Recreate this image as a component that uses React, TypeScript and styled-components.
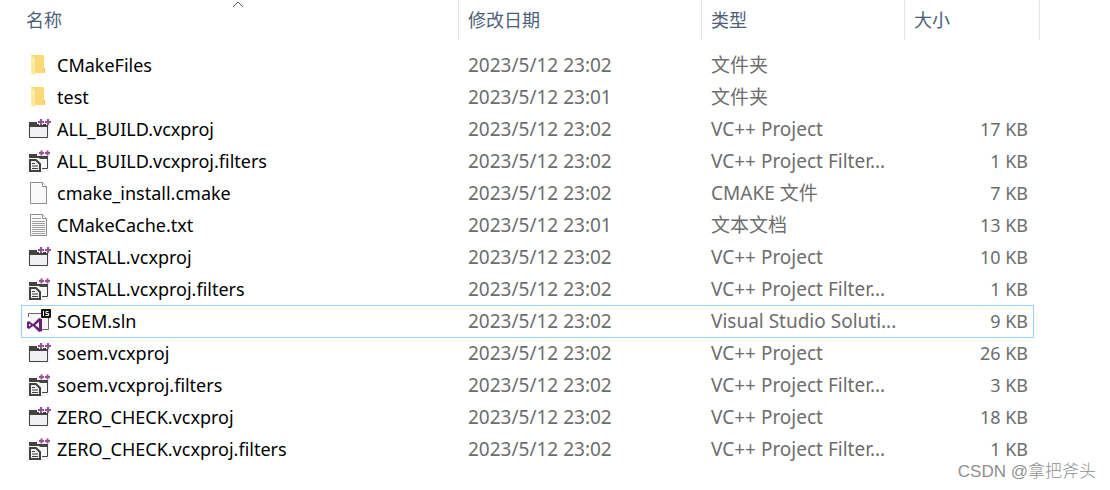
import React from "react";
import styled, { createGlobalStyle } from "styled-components";

const GlobalStyle = createGlobalStyle`
  body {
    margin: 0;
    background: #fff;
    font-family: "Noto Sans", "Noto Sans CJK SC", sans-serif;
  }
`;

const Page = styled.main`
  position: relative;
  padding: 0 70px 25px 21px;
`;

const FileTable = styled.table`
  width: 100%;
  table-layout: fixed;
  border-collapse: separate;
  border-spacing: 0;
`;

const Column = styled.col<{ $width?: number }>`
  width: ${(p) => (p.$width ? `${p.$width}px` : "auto")};
`;

const HeaderCell = styled.th<{ $first?: boolean }>`
  position: relative;
  height: 40px;
  padding: 0 0 2px ${(p) => (p.$first ? 5 : 9)}px;
  border-right: 1px solid #e5e5e5;
  box-sizing: border-box;
  text-align: left;
  vertical-align: middle;
  font-weight: 400;
`;

const SortButton = styled.button`
  display: block;
  padding: 0;
  border: 0;
  background: none;
  color: #4c607a;
  font-family: "Noto Sans CJK SC", sans-serif;
  font-size: 18px;
  font-weight: 400;
  line-height: 24px;
`;

const SortMark = styled.svg`
  position: absolute;
  top: 1px;
  left: calc(50% - 8px);
`;

const Body = styled.tbody`
  &::before {
    content: "";
    display: table-row;
    height: 9px;
  }
`;

const Row = styled.tr`
  position: relative;
  height: 32px;
`;

const Cell = styled.td`
  height: 32px;
  padding: 0 0 0 9px;
  color: #6d6d6d;
  font-size: 19px;
  line-height: 32px;
  white-space: nowrap;
`;

const SizeCell = styled(Cell)`
  padding-right: 12px;
  font-size: 18px;
  text-align: right;
`;

const NameCell = styled(Cell)<{ $focused?: boolean }>`
  padding-left: 5px;
  color: #000;
  font-size: 18px;

  &::after {
    content: "";
    display: ${(p) => (p.$focused ? "block" : "none")};
    position: absolute;
    inset: 0 6px -1px 0;
    border: 1px solid #99d1ff;
    pointer-events: none;
  }
`;

const FileName = styled.span`
  display: flex;
  align-items: center;
  gap: 6px;
`;

const Icon = styled.svg`
  flex: none;
  width: 25px;
  height: 24px;
`;

const Watermark = styled.footer`
  position: absolute;
  right: 14px;
  bottom: 6px;
  color: #8f8f8f;
  font-family: "Liberation Sans", "Noto Sans CJK SC", sans-serif;
  font-size: 17px;
  font-weight: 300;
  line-height: 24px;
`;

type Kind = "folder" | "project" | "filters" | "file" | "text" | "solution";

function Pluses({ d }: { d: string }) {
  return (
    <>
      <path d={d} stroke="#f6f6f6" strokeWidth="4" fill="none" />
      <path d={d} stroke="#9b4f96" strokeWidth="2" fill="none" />
    </>
  );
}

function FileIcon({ kind }: { kind: Kind }) {
  return (
    <Icon viewBox="0 0 25 24" aria-hidden="true">
      {kind === "folder" && (
        <>
          <path d="M5 2h13v13h1v5H8z" fill="#f9d978" />
          <path d="M5 2l4 3v18l-4-3z" fill="#ffe9a2" />
          <path d="M18 15h1v5h-1z" fill="#f0c75c" />
        </>
      )}
      {kind === "project" && (
        <>
          <path d="M2 3h22v19H2z" fill="#f6f6f6" />
          <path d="M3.500 8v12.500h18V8" fill="#f0eff1" stroke="#424242" />
          <path d="M3 5h8v2h11v3H3z" fill="#424242" />
          <Pluses d="M12 5h6M15 2v6M19 5h6M22 2v6" />
        </>
      )}
      {kind === "filters" && (
        <>
          <path d="M1 3h22v20H1z" fill="#f6f6f6" />
          <path d="M3 5h8v2h11v3H3z" fill="#424242" />
          <path d="M21.500 8v11.500H16" fill="none" stroke="#424242" />
          <path d="M2 9h11l3 3v11H2z" fill="#f6f6f6" />
          <path d="M4 11h6l4 4v7H4z" fill="#f0eff1" stroke="#424242" strokeWidth="2" />
          <path d="M6 14.500h3M6 17h6M6 19.500h6" stroke="#424242" />
          <Pluses d="M13 4h5M15.500 1.500v5M19 4h5M21.500 1.500v5" />
        </>
      )}
      {(kind === "file" || kind === "text") && (
        <>
          <path d="M4.500 1.500h12l4 4v17h-16z" fill="#f9f9f9" stroke="#8c8c8c" />
          <path d="M16.500 1.500v4h4" fill="#fff" stroke="#8c8c8c" />
        </>
      )}
      {kind === "text" && (
        <path d="M6 5.500h9M6 8.500h13M6 10.500h13M6 12.500h13M6 14.500h13M6 16.500h13M6 18.500h13M6 20.500h13" stroke="#a0a0a0" />
      )}
      {kind === "solution" && (
        <>
          <path d="M2.500 8V4.500h20v16H14" fill="#f6f6f6" stroke="#686868" />
          <rect x="15" y="0" width="10" height="9" rx="1" fill="#111" />
          <path d="M17.500 2v5M22.500 2.500h-2.500v2h2.500v2h-3" stroke="#fff" fill="none" />
          <path d="M1 13l2-1 4 3 6-6 3 1v12l-3 1-6-6-4 3-2-1zM3 14.500v3l2-1.500zM13 13l-4 3 4 3z" fill="#68217a" fillRule="evenodd" />
        </>
      )}
    </Icon>
  );
}

interface FileEntry {
  name: string;
  date: string;
  type: string;
  size?: string;
  kind: Kind;
  focused?: boolean;
}

const files: FileEntry[] = [
  { name: "CMakeFiles", date: "2023/5/12 23:02", type: "文件夹", kind: "folder" },
  { name: "test", date: "2023/5/12 23:01", type: "文件夹", kind: "folder" },
  { name: "ALL_BUILD.vcxproj", date: "2023/5/12 23:02", type: "VC++ Project", size: "17 KB", kind: "project" },
  { name: "ALL_BUILD.vcxproj.filters", date: "2023/5/12 23:02", type: "VC++ Project Filter...", size: "1 KB", kind: "filters" },
  { name: "cmake_install.cmake", date: "2023/5/12 23:02", type: "CMAKE 文件", size: "7 KB", kind: "file" },
  { name: "CMakeCache.txt", date: "2023/5/12 23:01", type: "文本文档", size: "13 KB", kind: "text" },
  { name: "INSTALL.vcxproj", date: "2023/5/12 23:02", type: "VC++ Project", size: "10 KB", kind: "project" },
  { name: "INSTALL.vcxproj.filters", date: "2023/5/12 23:02", type: "VC++ Project Filter...", size: "1 KB", kind: "filters" },
  { name: "SOEM.sln", date: "2023/5/12 23:02", type: "Visual Studio Soluti...", size: "9 KB", kind: "solution", focused: true },
  { name: "soem.vcxproj", date: "2023/5/12 23:02", type: "VC++ Project", size: "26 KB", kind: "project" },
  { name: "soem.vcxproj.filters", date: "2023/5/12 23:02", type: "VC++ Project Filter...", size: "3 KB", kind: "filters" },
  { name: "ZERO_CHECK.vcxproj", date: "2023/5/12 23:02", type: "VC++ Project", size: "18 KB", kind: "project" },
  { name: "ZERO_CHECK.vcxproj.filters", date: "2023/5/12 23:02", type: "VC++ Project Filter...", size: "1 KB", kind: "filters" },
];

export default function App() {
  return (
    <Page>
      <GlobalStyle />
      <FileTable>
        <colgroup>
          <Column />
          <Column $width={243} />
          <Column $width={203} />
          <Column $width={135} />
        </colgroup>
        <thead>
          <tr>
            <HeaderCell $first aria-sort="ascending">
              <SortButton type="button">名称</SortButton>
              <SortMark width="12" height="7" viewBox="0 0 12 7" aria-hidden="true">
                <path d="M1 6l5-5 5 5" fill="none" stroke="#5a5a5a" />
              </SortMark>
            </HeaderCell>
            <HeaderCell><SortButton type="button">修改日期</SortButton></HeaderCell>
            <HeaderCell><SortButton type="button">类型</SortButton></HeaderCell>
            <HeaderCell><SortButton type="button">大小</SortButton></HeaderCell>
          </tr>
        </thead>
        <Body>
          {files.map((file) => (
            <Row key={file.name}>
              <NameCell $focused={file.focused}>
                <FileName>
                  <FileIcon kind={file.kind} />
                  {file.name}
                </FileName>
              </NameCell>
              <Cell>{file.date}</Cell>
              <Cell>{file.type}</Cell>
              <SizeCell>{file.size}</SizeCell>
            </Row>
          ))}
        </Body>
      </FileTable>
      <Watermark>CSDN @拿把斧头</Watermark>
    </Page>
  );
}
